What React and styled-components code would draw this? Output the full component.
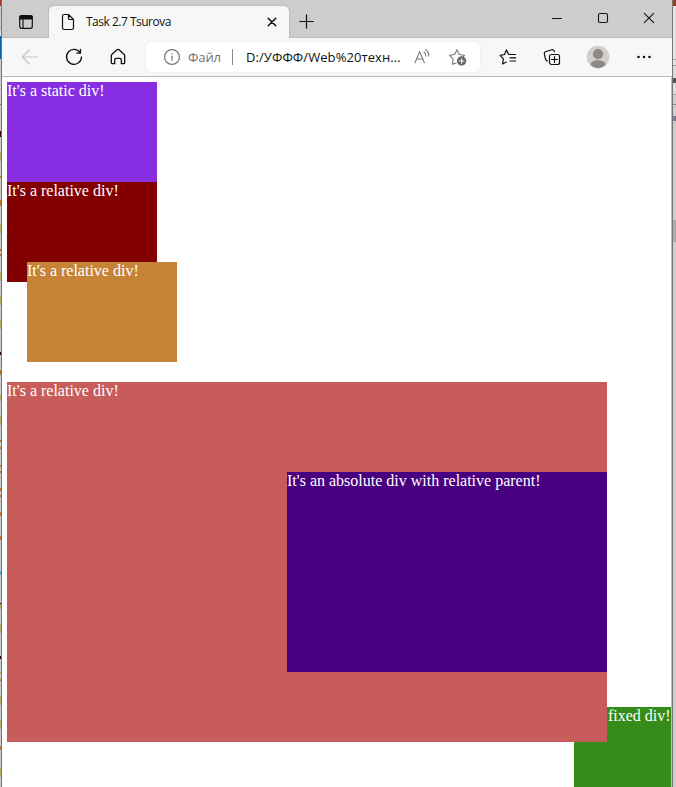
import React from 'react';
import styled, { createGlobalStyle } from 'styled-components';

const GlobalStyle = createGlobalStyle`
  * { box-sizing: border-box; }
  body { margin: 0; overflow: hidden; background: #cdcdcd; }
`;

const Desktop = styled.div`
  display: grid;
  grid-template-columns: 2px 670px 4px;
  width: 676px;
  height: 787px;
  overflow: hidden;
`;

const Edge = styled.div`
  display: flex;
  flex-direction: column;
  overflow: hidden;
  background: #cdcdcd;
  border-left: ${(p) => (p.$side === 'right' ? '1px solid #777' : '0')};
  border-right: ${(p) => (p.$side === 'left' ? '1px solid #747474' : '0')};
`;

const Strip = styled.div`
  flex: none;
  height: ${(p) => p.$h}px;
  margin-top: ${(p) => p.$gap}px;
  background: ${(p) => p.$color};
`;

const Window = styled.div`
  display: flex;
  flex-direction: column;
  min-width: 0;
  height: 787px;
  background: #fff;
`;

const TitleBar = styled.header`
  display: flex;
  height: 38px;
  background: #cdcdcd;
  font-family: "Open Sans", "Noto Sans", sans-serif;
`;

const TabActions = styled.div`
  width: 47px;
  padding: 14px 0 0 16px;
  border-bottom: 1px solid #bcbcbc;
`;

const Tab = styled.div`
  display: flex;
  width: 240px;
  height: 32px;
  margin-top: 6px;
  padding-left: 11px;
  background: #f7f7f7;
  border-radius: 5px 5px 0 0;
  box-shadow: 0 0 2px #999;
  clip-path: inset(-2px -2px 0 -2px);
`;

const TabTitle = styled.span`
  width: 181px;
  margin-left: 10px;
  font-size: 12px;
  line-height: 31px;
  letter-spacing: -0.5px;
  color: #111;
  white-space: nowrap;
`;

const TabRest = styled.div`
  display: flex;
  flex: 1;
  border-bottom: 1px solid #c0c0c0;
`;

const WindowControls = styled.div`
  display: flex;
  align-items: flex-start;
  margin-left: auto;
  padding: 12px 17px 0 0;
  gap: 34px;
`;

const Icon = styled.svg`
  display: block;
  flex: none;
  fill: none;
  stroke: ${(p) => p.$color || '#111'};
  stroke-width: ${(p) => p.$weight || 1.2};
  stroke-linecap: round;
  stroke-linejoin: round;
  margin: ${(p) => p.$margin || '0'};
`;

const Toolbar = styled.nav`
  display: flex;
  align-items: center;
  flex: none;
  height: 39px;
  background: #f7f7f7;
  border-bottom: 1px solid #b9b9b9;
  font-family: "Open Sans", "Noto Sans", sans-serif;
`;

const NavButtons = styled.div`
  display: flex;
  gap: 24px;
  width: 144px;
  padding-left: 18px;
`;

const AddressBar = styled.div`
  display: flex;
  align-items: center;
  width: 334px;
  height: 30px;
  padding-left: 16px;
  background: #fff;
  border-radius: 5px;
  box-shadow: 0 0 3px #e7e7e7;
`;

const Scheme = styled.span`
  width: 44px;
  margin-left: 6px;
  font-size: 13px;
  letter-spacing: -0.1px;
  color: #707070;
`;

const Divider = styled.span`
  width: 1px;
  height: 16px;
  background: #888;
`;

const Address = styled.span`
  width: 167px;
  margin-left: 13px;
  font-size: 13px;
  letter-spacing: 0.08px;
  color: #111;
  white-space: nowrap;
`;

const ToolbarActions = styled.div`
  display: flex;
  align-items: center;
  gap: 24px;
  margin-left: 18px;
`;

const Viewport = styled.main`
  position: relative;
  flex: 1;
  overflow: hidden;
  padding: 5px;
  border-right: 1px solid #bdbdbd;
  background: #fff;
  color: #fff;
  font: 16px/18px "Liberation Serif", "Times New Roman", serif;
  white-space: nowrap;
`;

const DemoBox = styled.div`
  width: 150px;
  height: 100px;
  background: ${(p) => p.$color};
`;

const ShiftedBox = styled(DemoBox)`
  position: relative;
  top: -20px;
  left: 20px;
`;

const ParentBox = styled(DemoBox)`
  position: relative;
  width: 600px;
  height: 360px;
  z-index: 1;
`;

const ChildBox = styled(DemoBox)`
  position: absolute;
  right: 0;
  bottom: 70px;
  width: 320px;
  height: 200px;
`;

const FixedBox = styled(DemoBox)`
  position: absolute;
  right: 0;
  top: 630px;
  width: 97px;
`;

// Each strip is [top, height, colour].
const olive = '#b5ad6a';
const amber = '#b9772c';
const plum = '#3b0019';
const leftStrips = [
  [0, 6, '#a43a1d'], [14, 1, '#aaa'], [28, 1, '#aaa'], [29, 7, '#ddd'], [36, 23, '#0065b3'], [104, 1, '#777'],
  [131, 6, plum], [152, 9, olive], [176, 2, amber], [200, 6, amber], [224, 9, olive],
  [249, 2, amber], [254, 2, amber], [272, 9, olive], [296, 9, olive], [320, 9, olive],
  [352, 3, plum], [370, 5, amber], [395, 6, olive], [416, 9, olive], [440, 2, amber],
  [447, 2, amber], [465, 2, amber], [471, 2, amber], [488, 3, amber], [495, 2, amber],
  [512, 4, amber], [536, 4, amber], [571, 4, '#55a9d2'], [603, 1, '#000'], [604, 5, olive],
  [624, 9, olive], [656, 3, plum], [672, 2, olive], [679, 2, amber], [696, 9, olive],
  [720, 9, olive], [746, 4, amber], [768, 9, olive],
];
const rightStrips = [
  [0, 6, '#a43a1d'], [6, 53, '#e4e4e4'], [59, 1, '#aaa'], [60, 5, '#e4e4e4'], [65, 1, '#999'],
  [66, 12, '#ddd'], [78, 5, '#555'], [83, 11, '#ddd'], [94, 1, '#aaa'], [104, 1, '#888'],
  [116, 5, '#817c92'], [220, 22, '#ababab'],
];

function ScreenEdge({ side, strips }) {
  return (
    <Edge $side={side}>
      {strips.map(([top, height, color], i) => {
        const previousEnd = i ? strips[i - 1][0] + strips[i - 1][1] : 0;
        return <Strip key={top} $h={height} $gap={top - previousEnd} $color={color} />;
      })}
    </Edge>
  );
}

export default function App() {
  return (
    <>
      <GlobalStyle />
      <Desktop>
        <ScreenEdge side="left" strips={leftStrips} />
        <Window>
          <TitleBar>
            <TabActions>
              <Icon width="16" height="16" viewBox="0 0 16 16">
                <rect x="1.7" y="1.7" width="12.6" height="12.6" rx="2" />
                <path d="M2 2h12v3H2z" fill="#111" />
                <path d="M5 5v9" />
              </Icon>
            </TabActions>
            <Tab>
              <Icon width="16" height="18" viewBox="0 0 16 18" $margin="7px 0 0">
                <path d="M2.5 3q0-1.5 1.5-1.5h4.5l5 5V15q0 1.5-1.5 1.5H4Q2.5 16.5 2.5 15zM8.5 1.5v4q0 1 1 1h4" />
              </Icon>
              <TabTitle>Task 2.7 Tsurova</TabTitle>
              <Icon width="10" height="10" viewBox="0 0 10 10" $margin="11px 0 0" $weight={1.5}>
                <path d="m1.2 1.2 7.6 7.6m0-7.6L1.2 8.8" />
              </Icon>
            </Tab>
            <TabRest>
              <Icon width="15" height="15" viewBox="0 0 15 15" $margin="14px 0 0 10px">
                <path d="M7.5.8v13.4M.8 7.5h13.4" />
              </Icon>
              <WindowControls>
                <Icon width="12" height="12" viewBox="0 0 12 12" $weight={1}>
                  <path d="M1.5 6.5h9" />
                </Icon>
                <Icon width="12" height="12" viewBox="0 0 12 12" $weight={1.1}>
                  <rect x="1.5" y="1.5" width="9" height="9" rx="1.5" />
                </Icon>
                <Icon width="12" height="12" viewBox="0 0 12 12" $weight={1.1}>
                  <path d="m1.3 1.3 9.4 9.4m0-9.4-9.4 9.4" />
                </Icon>
              </WindowControls>
            </TabRest>
          </TitleBar>

          <Toolbar>
            <NavButtons>
              <Icon width="20" height="20" viewBox="0 0 20 20" $color="#c6c6c6">
                <path d="M17.5 10H2.3m7-7-7 7 7 7" />
              </Icon>
              <Icon width="20" height="20" viewBox="0 0 20 20" $weight={1.3}>
                <path d="M16.5 6.1A7.5 7.5 0 1 0 17.5 10M16.5 2.4v3.7h-3.8" />
              </Icon>
              <Icon width="20" height="20" viewBox="0 0 20 20" $weight={1.3}>
                <path d="M3.3 8.5q0-.7.5-1.1l5.1-4.6q1.1-.9 2.2 0l5.1 4.6q.5.4.5 1.1v7q0 1.2-1.2 1.2h-2.2v-4q0-1.4-1.4-1.4H8.1q-1.4 0-1.4 1.4v4H4.5q-1.2 0-1.2-1.2z" />
              </Icon>
            </NavButtons>
            <AddressBar>
              <Icon width="20" height="20" viewBox="0 0 20 20" $color="#777">
                <circle cx="10" cy="10" r="7.4" />
                <path d="M10 9v4.3M10 6.6v.2" />
              </Icon>
              <Scheme>Файл</Scheme>
              <Divider />
              <Address>D:/УФФФ/Web%20техн...</Address>
              <Icon width="18" height="18" viewBox="0 0 18 18" $color="#777" $weight={1.1}>
                <path d="M2 14.8 6.7 3.6l4.6 11.2M3.5 11h6.4M11 4q2 1.5 1.8 4M12.7 1.7q3.3 2.4 3 6.3" />
              </Icon>
              <Icon width="20" height="20" viewBox="0 0 20 20" $color="#777" $weight={1.1} $margin="0 0 0 17px">
                <path d="m8.1 16-3.7 1.3.8-5.2L1.5 8.3l5.1-.8L9 2.7l2.4 4.8 5.1.8-1.3 1.4" />
                <circle cx="13.6" cy="14" r="4.1" fill="#666" stroke="#666" />
                <path d="M13.6 11.8v4.4m-2.2-2.2h4.4" stroke="#fff" />
              </Icon>
            </AddressBar>
            <ToolbarActions>
              <Icon width="20" height="20" viewBox="0 0 20 20">
                <path d="m8.2 15-3.6 2 .8-5.1-3.2-3.6 4.3-.8 2-4.6 2.1 4.6H17.7M12 10.8h5.7M12 14h5.7" />
              </Icon>
              <Icon width="20" height="20" viewBox="0 0 20 20">
                <path d="m5.2 14-1.1-.9Q3.6 12.7 3.4 12L2.3 6.7q-.3-1.5 1.1-2l6.4-2q1.6-.5 2.2 1l.4 1.2" />
                <rect x="7.5" y="7.5" width="10" height="10" rx="2" />
                <path d="M12.5 9.5v6m-3-3h6" />
              </Icon>
              <Icon width="24" height="24" viewBox="0 0 24 24" $color="none">
                <circle cx="12" cy="12" r="11.3" fill="#d3d0cc" />
                <circle cx="12" cy="9.2" r="5.1" fill="#8e8a86" />
                <path d="M4.5 19.8c0-6 15-6 15 0-4 4.6-11 4.6-15 0z" fill="#8e8a86" />
              </Icon>
              <Icon width="20" height="20" viewBox="0 0 20 20" $weight={2.6}>
                <path d="M4.5 10h.01M10 10h.01M15.5 10h.01" />
              </Icon>
            </ToolbarActions>
          </Toolbar>

          <Viewport>
            <DemoBox $color="#872de2">It's a static div!</DemoBox>
            <DemoBox $color="#820000">It's a relative div!</DemoBox>
            <ShiftedBox $color="#c68338">It's a relative div!</ShiftedBox>
            <ParentBox $color="#c75c5a">
              It's a relative div!
              <ChildBox $color="#490080">It's an absolute div with relative parent!</ChildBox>
            </ParentBox>
            <FixedBox $color="#358c1a">It's a fixed div!</FixedBox>
          </Viewport>
        </Window>
        <ScreenEdge side="right" strips={rightStrips} />
      </Desktop>
    </>
  );
}
